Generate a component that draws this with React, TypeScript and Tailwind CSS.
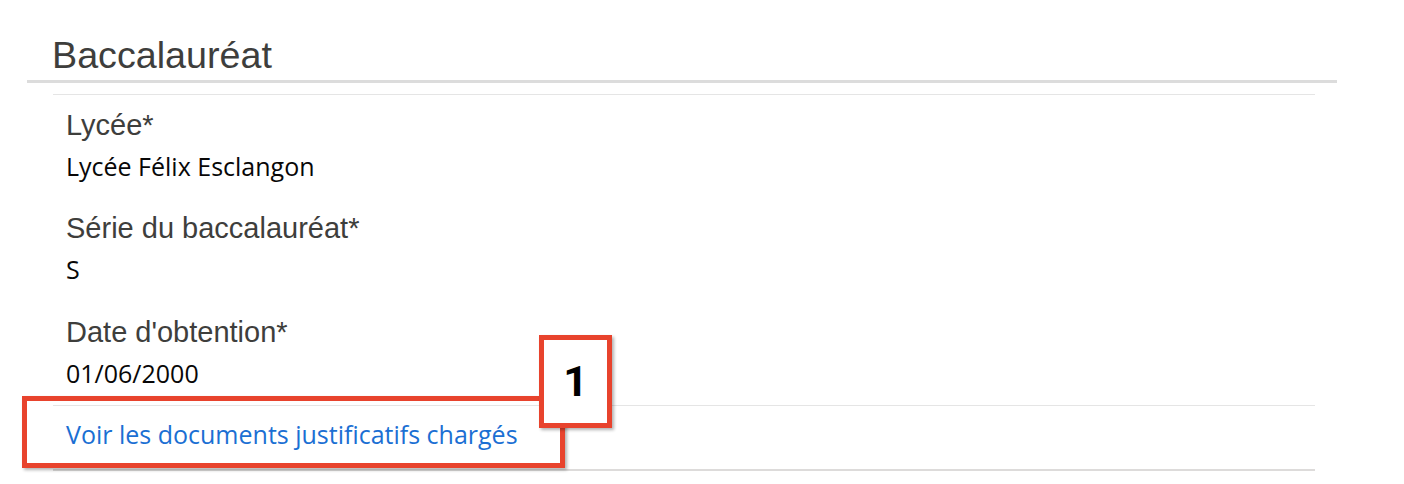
const fields = [
  { label: "Lycée*", value: "Lycée Félix Esclangon" },
  { label: "Série du baccalauréat*", value: "S" },
  { label: "Date d'obtention*", value: "01/06/2000" },
];

export default function App() {
  return (
    <div className="relative h-[484px] w-full overflow-hidden bg-white pl-[27px] pt-[33px]">
      <section className="w-[1310px]">
        <h2 className="border-b-[3px] border-[#dcdcdc] pb-[3px] pl-[25px] font-[family-name:'Liberation_Sans',Arial,sans-serif] text-[37.7px] leading-[44px] text-[#3e3e3c]">
          Baccalauréat
        </h2>

        <div className="ml-[26px] mt-[11px] w-[1262px] border-t border-b-2 border-t-[#e5e5e5] border-b-[#dddbda]">
          <div className="px-[13px] pt-[13px] pb-[17px]">
            {fields.map((f, i) => (
              <div key={f.label} className={i < fields.length - 1 ? (i === 0 ? "mb-[30px]" : "mb-[31px]") : ""}>
                <div className="font-[family-name:'Liberation_Sans',Arial,sans-serif] text-[29px] leading-[34px] text-[#3e3e3c]">
                  {f.label}
                </div>
                <div className="mt-[9px] font-[family-name:'Open_Sans',sans-serif] text-[25px] leading-[30px] text-[#080707]">
                  {f.value}
                </div>
              </div>
            ))}
          </div>

          <div className="border-t border-[#e5e5e5] px-[13px] pt-[13px] pb-[19px]">
            <a href="#" className="font-[family-name:'Open_Sans',sans-serif] text-[25px] leading-[30px] text-[#1b6fd3]">
              Voir les documents justificatifs chargés
            </a>
          </div>
        </div>
      </section>

      {/* annotation overlay */}
      <div className="absolute left-[22px] top-[396px] h-[72px] w-[543px] border-[5px] border-[#e8432d] shadow-[2px_2px_3px_rgba(0,0,0,0.3)]" />
      <div className="absolute left-[539px] top-[335px] flex h-[93px] w-[73px] items-center justify-center border-[5px] border-[#e8432d] bg-white shadow-[2px_2px_3px_rgba(0,0,0,0.3)]">
        <span className="font-[family-name:Roboto,Inter,sans-serif] text-[43px] font-bold leading-none text-black">1</span>
      </div>
    </div>
  );
}
